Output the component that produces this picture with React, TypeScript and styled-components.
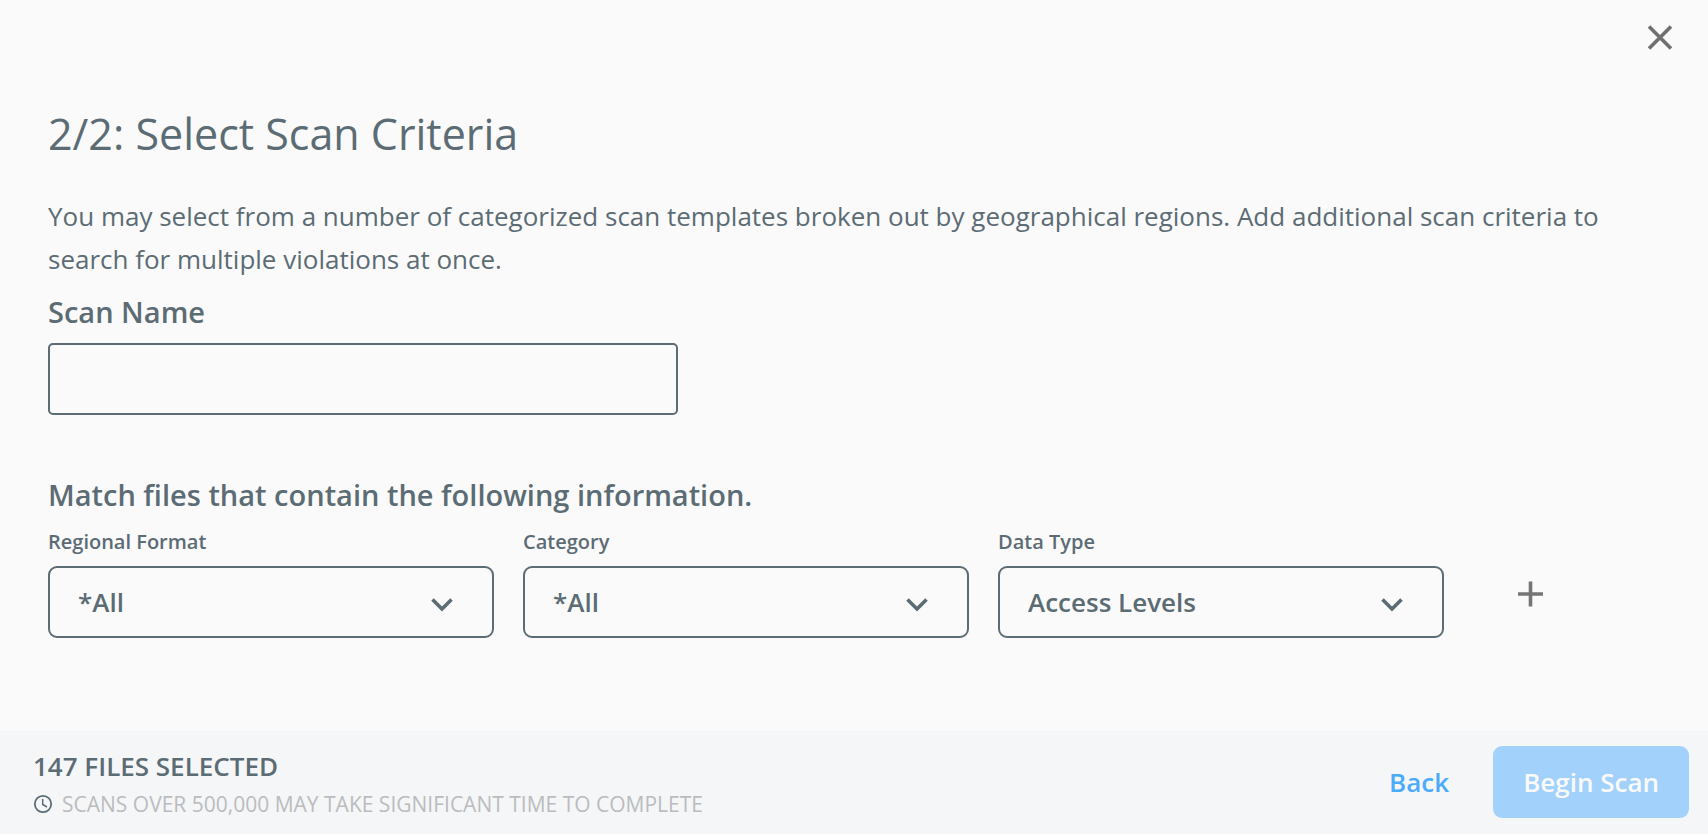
import { useState } from "react";
import styled, { createGlobalStyle } from "styled-components";

const ink = "#5c6c75";

const GlobalStyle = createGlobalStyle`
  * {
    box-sizing: border-box;
  }
  body {
    margin: 0;
    background: #fafafa;
  }
  body, input, select, button {
    font-family: "Open Sans", "Liberation Sans", sans-serif;
    color: ${ink};
  }
`;

const Dialog = styled.div`
  display: flex;
  flex-direction: column;
  min-height: 100vh;
`;

const TopBar = styled.header`
  display: flex;
  justify-content: flex-end;
  padding: 20px 31px 0;
`;

const IconButton = styled.button<{ $color: string }>`
  display: grid;
  place-items: center;
  padding: 0;
  border: 0;
  background: none;
  color: ${(p) => p.$color};
  cursor: pointer;
`;

const Content = styled.main`
  flex: 1;
  padding: 50px 48px 48px;
`;

const Title = styled.h1`
  margin: 0;
  font-size: 43px;
  line-height: 60px;
  font-weight: 400;
`;

const Intro = styled.p`
  margin: 31px 0 0;
  font-size: 26px;
  line-height: 43px;
`;

const SectionLabel = styled.label`
  display: block;
  margin-top: 11px;
  font-size: 29px;
  line-height: 40px;
  font-weight: 600;
`;

const SectionTitle = styled.h2`
  margin: 60px 0 0;
  font-size: 29px;
  line-height: 40px;
  font-weight: 600;
`;

const NameInput = styled.input`
  display: block;
  width: 100%;
  max-width: 630px;
  height: 72px;
  margin-top: 11px;
  padding: 0 28px;
  border: 2px solid ${ink};
  border-radius: 5px;
  background: transparent;
  font-size: 26px;
`;

const CriteriaRow = styled.div`
  display: flex;
  align-items: flex-end;
  gap: 29px;
  margin-top: 13px;
  padding-right: 71px;
`;

const Field = styled.div`
  flex: 1;
  min-width: 0;
`;

const FieldLabel = styled.label`
  display: block;
  font-size: 20px;
  line-height: 28px;
  font-weight: 600;
`;

const SelectBox = styled.div`
  display: grid;
  align-items: center;
  margin-top: 10px;

  > * {
    grid-area: 1 / 1;
  }
  > svg {
    justify-self: end;
    margin-right: 41px;
    margin-top: 5px;
    pointer-events: none;
  }
`;

const Select = styled.select`
  appearance: none;
  width: 100%;
  height: 72px;
  padding: 0 72px 0 28px;
  border: 2px solid ${ink};
  border-radius: 9px;
  background: transparent;
  font-size: 26px;
  font-weight: 600;
`;

const AddSlot = styled.div`
  display: flex;
  justify-content: center;
  width: 116px;
  padding-bottom: 24px;
`;

const Footer = styled.footer`
  display: flex;
  align-items: flex-end;
  justify-content: space-between;
  padding: 15px 19px 16px 33px;
  background: #f4f6f8;
`;

const Count = styled.div`
  font-size: 26px;
  line-height: 36px;
  font-weight: 600;
`;

const Notice = styled.div`
  display: flex;
  align-items: center;
  gap: 9px;
  margin-top: 6px;
  font-size: 21px;
  line-height: 28px;
  color: #bbbcbe;

  svg {
    color: ${ink};
  }
`;

const Actions = styled.div`
  display: flex;
  align-items: center;
  gap: 14px;
`;

const ActionButton = styled.button<{ $primary?: boolean }>`
  height: 72px;
  padding: 0 30px;
  border: 0;
  border-radius: 9px;
  background: ${(p) => (p.$primary ? "#a2d2fb" : "transparent")};
  color: ${(p) => (p.$primary ? "#fafafa" : "#4dabfc")};
  font-size: 26px;
  font-weight: 600;
  cursor: pointer;
`;

const fields = [
  { id: "region", label: "Regional Format", options: ["*All"] },
  { id: "category", label: "Category", options: ["*All"] },
  { id: "type", label: "Data Type", options: ["Access Levels"] },
];

const CloseIcon = () => (
  <svg width="34" height="34" viewBox="0 0 34 34" fill="none" stroke="currentColor" strokeWidth="3.6">
    <path d="M6 6.5 28 28.5M28 6.5 6 28.5" />
  </svg>
);

const PlusIcon = () => (
  <svg width="40" height="40" viewBox="0 0 40 40" fill="none" stroke="currentColor" strokeWidth="3.6">
    <path d="M19.5 7.5V32.5M7 20H32" />
  </svg>
);

const ChevronIcon = () => (
  <svg width="22" height="14" viewBox="0 0 22 14" fill="none" stroke="currentColor" strokeWidth="3.6">
    <path d="M1.5 1.5 11 11 20.5 1.5" />
  </svg>
);

const ClockIcon = () => (
  <svg width="20" height="20" viewBox="0 0 20 20" fill="none" stroke="currentColor" strokeWidth="1.8">
    <circle cx="10" cy="10" r="8.2" />
    <path d="M9.7 5V10.5L14 13" strokeWidth="1.5" />
  </svg>
);

export default function App() {
  const [name, setName] = useState("");

  return (
    <>
      <GlobalStyle />
      <Dialog>
        <TopBar>
          <IconButton $color="#6f7170" aria-label="Close">
            <CloseIcon />
          </IconButton>
        </TopBar>
        <Content>
          <Title>2/2: Select Scan Criteria</Title>
          <Intro>
            You may select from a number of categorized scan templates broken out by geographical
            regions. Add additional scan criteria to search for multiple violations at once.
          </Intro>
          <SectionLabel htmlFor="scan-name">Scan Name</SectionLabel>
          <NameInput id="scan-name" value={name} onChange={(e) => setName(e.target.value)} />
          <SectionTitle>Match files that contain the following information.</SectionTitle>
          <CriteriaRow>
            {fields.map((field) => (
              <Field key={field.id}>
                <FieldLabel htmlFor={field.id}>{field.label}</FieldLabel>
                <SelectBox>
                  <Select id={field.id}>
                    {field.options.map((option) => (
                      <option key={option}>{option}</option>
                    ))}
                  </Select>
                  <ChevronIcon />
                </SelectBox>
              </Field>
            ))}
            <AddSlot>
              <IconButton $color="#757575" aria-label="Add criteria">
                <PlusIcon />
              </IconButton>
            </AddSlot>
          </CriteriaRow>
        </Content>
        <Footer>
          <div>
            <Count>147 FILES SELECTED</Count>
            <Notice>
              <ClockIcon />
              SCANS OVER 500,000 MAY TAKE SIGNIFICANT TIME TO COMPLETE
            </Notice>
          </div>
          <Actions>
            <ActionButton>Back</ActionButton>
            <ActionButton $primary>Begin Scan</ActionButton>
          </Actions>
        </Footer>
      </Dialog>
    </>
  );
}
